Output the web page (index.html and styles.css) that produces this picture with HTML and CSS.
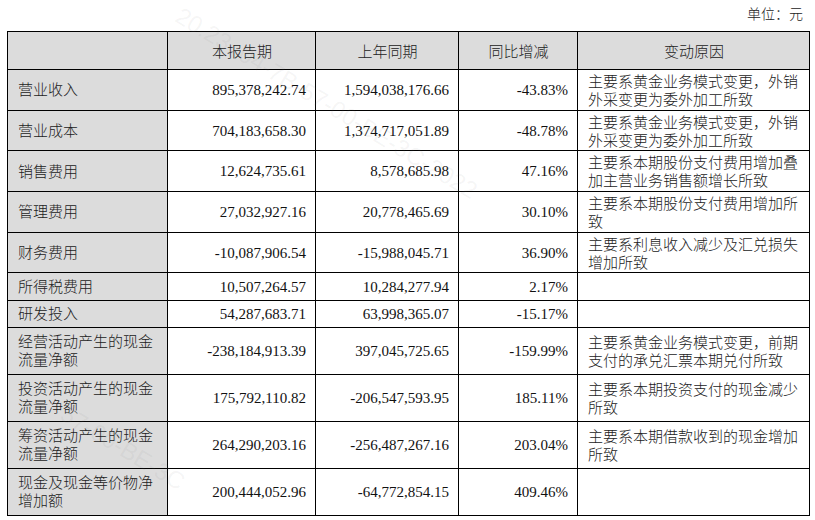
FILE: index.html
```html
<!DOCTYPE html>
<html lang="zh-CN">
<head>
<meta charset="utf-8">
<title>主要财务数据同比变动情况</title>
<link rel="stylesheet" href="styles.css">
</head>
<body>
<div class="page">
  <div class="unit">单位：元</div>
  <table class="fin">
    <colgroup>
      <col class="c-label">
      <col class="c-cur">
      <col class="c-prev">
      <col class="c-yoy">
      <col class="c-reason">
    </colgroup>
    <thead>
      <tr class="head">
        <th class="label"></th>
        <th>本报告期</th>
        <th>上年同期</th>
        <th>同比增减</th>
        <th>变动原因</th>
      </tr>
    </thead>
    <tbody>
      <tr class="two">
        <td class="label">营业收入</td>
        <td class="num">895,378,242.74</td>
        <td class="num">1,594,038,176.66</td>
        <td class="num">-43.83%</td>
        <td class="reason">主要系黄金业务模式变更，外销外采变更为委外加工所致</td>
      </tr>
      <tr class="two">
        <td class="label">营业成本</td>
        <td class="num">704,183,658.30</td>
        <td class="num">1,374,717,051.89</td>
        <td class="num">-48.78%</td>
        <td class="reason">主要系黄金业务模式变更，外销外采变更为委外加工所致</td>
      </tr>
      <tr class="two">
        <td class="label">销售费用</td>
        <td class="num">12,624,735.61</td>
        <td class="num">8,578,685.98</td>
        <td class="num">47.16%</td>
        <td class="reason">主要系本期股份支付费用增加叠加主营业务销售额增长所致</td>
      </tr>
      <tr class="two">
        <td class="label">管理费用</td>
        <td class="num">27,032,927.16</td>
        <td class="num">20,778,465.69</td>
        <td class="num">30.10%</td>
        <td class="reason">主要系本期股份支付费用增加所致</td>
      </tr>
      <tr class="two">
        <td class="label">财务费用</td>
        <td class="num">-10,087,906.54</td>
        <td class="num">-15,988,045.71</td>
        <td class="num">36.90%</td>
        <td class="reason">主要系利息收入减少及汇兑损失增加所致</td>
      </tr>
      <tr class="one">
        <td class="label">所得税费用</td>
        <td class="num">10,507,264.57</td>
        <td class="num">10,284,277.94</td>
        <td class="num">2.17%</td>
        <td class="reason"></td>
      </tr>
      <tr class="one">
        <td class="label">研发投入</td>
        <td class="num">54,287,683.71</td>
        <td class="num">63,998,365.07</td>
        <td class="num">-15.17%</td>
        <td class="reason"></td>
      </tr>
      <tr class="cash">
        <td class="label">经营活动产生的现金流量净额</td>
        <td class="num">-238,184,913.39</td>
        <td class="num">397,045,725.65</td>
        <td class="num">-159.99%</td>
        <td class="reason">主要系黄金业务模式变更，前期支付的承兑汇票本期兑付所致</td>
      </tr>
      <tr class="cash">
        <td class="label">投资活动产生的现金流量净额</td>
        <td class="num">175,792,110.82</td>
        <td class="num">-206,547,593.95</td>
        <td class="num">185.11%</td>
        <td class="reason">主要系本期投资支付的现金减少所致</td>
      </tr>
      <tr class="cash">
        <td class="label">筹资活动产生的现金流量净额</td>
        <td class="num">264,290,203.16</td>
        <td class="num">-256,487,267.16</td>
        <td class="num">203.04%</td>
        <td class="reason">主要系本期借款收到的现金增加所致</td>
      </tr>
      <tr class="cash">
        <td class="label">现金及现金等价物净增加额</td>
        <td class="num">200,444,052.96</td>
        <td class="num">-64,772,854.15</td>
        <td class="num">409.46%</td>
        <td class="reason"></td>
      </tr>
    </tbody>
  </table>
  <div class="wm wm-a">20.23  04-7B-57-00-BE-3C-2022</div>
  <div class="wm wm-b">57-00-BE-3C</div>
</div>
</body>
</html>
```

FILE: styles.css
```css
html, body {
  margin: 0;
  padding: 0;
  background: #ffffff;
}

body {
  font-family: "Liberation Serif", "Noto Sans CJK SC", serif;
  color: #111111;
  font-size: 15px;
}

.page {
  position: relative;
  width: 802px;
  padding: 0 6px 0 7px;
  overflow: hidden;
  height: 520px;
}

.unit {
  height: 31px;
  line-height: 26px;
  font-size: 14px;
  text-align: right;
  padding-right: 6px;
  font-family: "Noto Sans CJK SC", sans-serif;
  font-weight: 300;
  color: #222222;
}

.fin {
  width: 802px;
  border-collapse: collapse;
  table-layout: fixed;
}

.c-label { width: 160px; }
.c-cur { width: 148px; }
.c-prev { width: 143px; }
.c-yoy { width: 119px; }
.c-reason { width: 232px; }

.fin th,
.fin td {
  border: 1px solid #000000;
  padding: 0 9px 0 10px;
  line-height: 18px;
  vertical-align: middle;
}

.fin th {
  background: #dcdcdc;
  text-align: center;
  font-family: "Noto Sans CJK SC", sans-serif;
  font-weight: 300;
  color: #222222;
}

.head { height: 38px; }
.two { height: 40.7px; }
.one { height: 27.2px; }
.cash { height: 47px; }

.fin td.label {
  background: #dcdcdc;
  font-family: "Noto Sans CJK SC", sans-serif;
  font-weight: 300;
  color: #222222;
  padding-bottom: 1px;
}

.fin td.num {
  text-align: right;
  padding-right: 9px;
  white-space: nowrap;
}

.fin td.reason {
  font-family: "Noto Sans CJK SC", sans-serif;
  font-weight: 300;
  color: #222222;
  padding-right: 8px;
}

.wm {
  position: absolute;
  font-family: "Liberation Sans", sans-serif;
  font-size: 24px;
  color: rgba(120, 120, 120, 0.07);
  white-space: pre;
  transform-origin: left top;
  transform: rotate(31deg);
  pointer-events: none;
}

.wm-a {
  left: 185px;
  top: 2px;
}

.wm-b {
  left: 70px;
  top: 400px;
}
```
